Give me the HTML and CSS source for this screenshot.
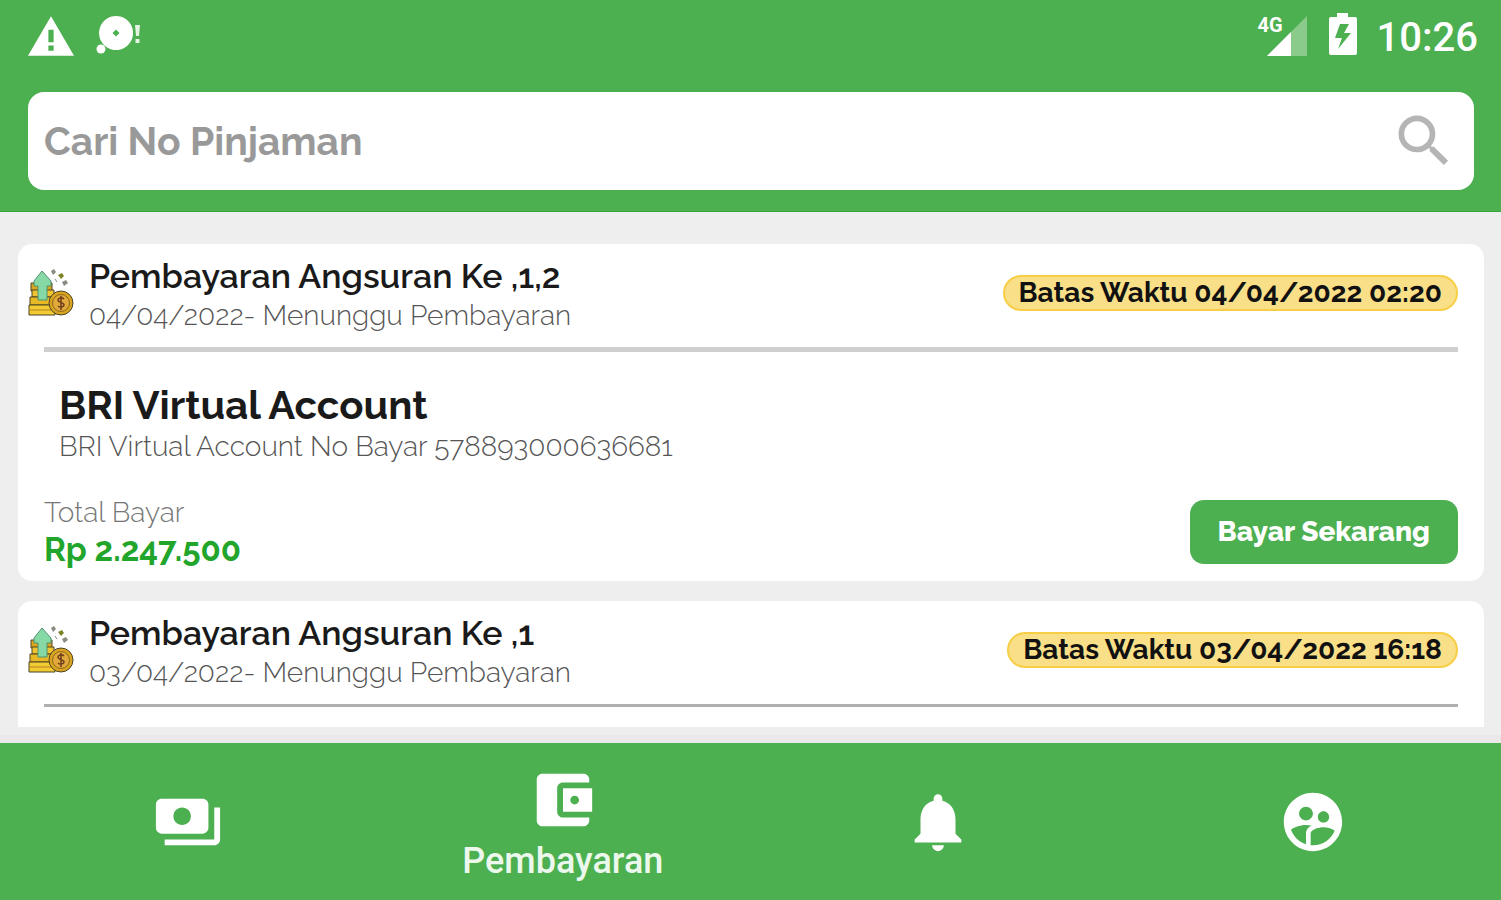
FILE: index.html
```html
<!DOCTYPE html>
<html lang="id">
<head>
<meta charset="utf-8">
<meta name="viewport" content="width=device-width, initial-scale=1">
<title>Pembayaran</title>
<link rel="stylesheet" href="styles.css">
</head>
<body>
<svg class="sprite" aria-hidden="true">
  <symbol id="coins" viewBox="0 0 48 48">
    <g stroke="#4c4426" stroke-width="1">
      <path d="M4 14h21v8H4z" fill="#dca51e"/>
      <path d="M5 21h22v7H5z" fill="#f0c431"/>
      <path d="M3 28h23v8H3z" fill="#e8b825"/>
      <path d="M2 36h26v10H2z" fill="#f2ca33"/>
      <path d="M3 41h24" stroke="#b9821d"/>
      <circle cx="34" cy="34" r="12" fill="#d9a520"/>
      <circle cx="34" cy="34" r="8.5" fill="#e2a93b" stroke="#8d681c"/>
      <path d="M15 2L7 12v5h4v14h9V17h4v-5z" fill="#86d9a5" stroke="#4f9271"/>
    </g>
    <path d="M37 30c-2-2-6-1-6 1 0 3 6 2 6 5 0 2-4 3-6 1M34 27v14" fill="none" stroke="#71421f" stroke-width="1.6"/>
    <path d="M24 2l3-2 2 3-3 3zM35 13l4-2 2 3-4 3z" fill="#8b8b82"/>
    <path d="M31 6l4-2 2 3-3 3z" fill="#7d8428"/>
    <path d="M28 10l2 3" stroke="#888" stroke-width="1"/>
  </symbol>
</svg>
<header class="top">
  <div class="status">
    <div class="status-group">
      <svg class="warn" viewBox="0 0 44 38" role="img" aria-label="Peringatan"><path fill="#fff" fill-rule="evenodd" d="M22 0L0 38h44zM19.500 13h5v12h-5zM19.500 28h5v5h-5z"/></svg>
      <svg class="disc" viewBox="0 0 46 38" role="img" aria-label="Notifikasi"><path fill="#fff" fill-rule="evenodd" d="M20 0a17 17 0 1 0 .1 0zM20 13.500l3.500 3.500-3.500 3.500-3.500-3.500z"/><circle cx="5" cy="33" r="4.500" fill="#fff"/><path d="M39 9h5l-1 11h-3zM39.500 23h4v4h-4z" fill="#e4f3e4"/></svg>
    </div>
    <div class="status-group status-right">
      <div class="signal">
        <span class="net">4G</span>
        <svg class="bars" viewBox="0 0 40 40" aria-hidden="true"><path d="M40 0V40H0z" fill="#8acb8c"/><path d="M24 16V40H0z" fill="#fff"/></svg>
      </div>
      <svg class="battery" viewBox="0 0 28 42" role="img" aria-label="Mengisi daya"><path fill="#fff" fill-rule="evenodd" d="M8 0h11v4h7q2 0 2 2v34q0 2-2 2H2q-2 0-2-2V6q0-2 2-2h6zM11 11L6 25h7l-4 11 13-16h-7l5-9z"/></svg>
      <time class="clock">10:26</time>
    </div>
  </div>
  <form class="search">
    <input class="search-input" type="search" placeholder="Cari No Pinjaman" aria-label="Cari No Pinjaman">
    <button class="search-button" type="button" aria-label="Cari">
      <svg class="search-icon" viewBox="0 0 24 24"><path fill="#b5b5b5" d="M15.500 14h-.79l-.28-.27A6.471 6.471 0 0 0 16 9.500 6.500 6.500 0 1 0 9.500 16c1.610 0 3.090-.59 4.230-1.570l.27.28v.79l5 4.990L20.490 19l-4.990-5zm-6 0C7.010 14 5 11.990 5 9.500S7.010 5 9.500 5 14 7.010 14 9.500 11.990 14 9.500 14z"/></svg>
    </button>
  </form>
</header>
<main class="content">
  <div class="list">
    <article class="card">
      <div class="card-head">
        <svg class="coins" aria-hidden="true"><use href="#coins"/></svg>
        <div class="heading">
          <h2 class="title">Pembayaran Angsuran Ke ,1,2</h2>
          <p class="sub">04/04/2022- Menunggu Pembayaran</p>
        </div>
        <span class="badge">Batas Waktu 04/04/2022 02:20</span>
      </div>
      <hr class="rule">
      <div class="account">
        <h3 class="bank">BRI Virtual Account</h3>
        <p class="sub">BRI Virtual Account No Bayar 578893000636681</p>
      </div>
      <div class="card-foot">
        <div>
          <p class="total-label">Total Bayar</p>
          <p class="total">Rp 2.247.500</p>
        </div>
        <button class="pay" type="button">Bayar Sekarang</button>
      </div>
    </article>
    <article class="card">
      <div class="card-head">
        <svg class="coins" aria-hidden="true"><use href="#coins"/></svg>
        <div class="heading">
          <h2 class="title">Pembayaran Angsuran Ke ,1</h2>
          <p class="sub">03/04/2022- Menunggu Pembayaran</p>
        </div>
        <span class="badge">Batas Waktu 03/04/2022 16:18</span>
      </div>
      <hr class="rule rule-thin">
    </article>
  </div>
</main>
<nav class="nav">
  <a class="nav-item" href="#pinjaman" aria-label="Pinjaman"><svg class="nav-icon" viewBox="0 0 24 24"><path d="M19 14V6c0-1.100-.9-2-2-2H3c-1.100 0-2 .9-2 2v8c0 1.100.9 2 2 2h14c1.100 0 2-.9 2-2zm-9-1c-1.660 0-3-1.340-3-3s1.340-3 3-3 3 1.340 3 3-1.340 3-3 3zm13-6v11c0 1.100-.9 2-2 2H4v-2h17V7h2z"/></svg></a>
  <a class="nav-item" href="#pembayaran" aria-current="page"><svg class="nav-icon" viewBox="0 0 24 24" aria-hidden="true"><path d="M21 18v1c0 1.100-.9 2-2 2H5c-1.110 0-2-.9-2-2V5c0-1.100.89-2 2-2h14c1.100 0 2 .9 2 2v1h-9c-1.110 0-2 .9-2 2v8c0 1.100.89 2 2 2h9zm-9-2h10V8H12v8zm4-2.500c-.83 0-1.500-.67-1.500-1.500s.67-1.500 1.500-1.500 1.500.67 1.500 1.500-.67 1.500-1.500 1.500z"/></svg><span class="nav-label">Pembayaran</span></a>
  <a class="nav-item" href="#notifikasi" aria-label="Notifikasi"><svg class="nav-icon" viewBox="0 0 24 24"><path d="M12 22c1.100 0 2-.9 2-2h-4c0 1.100.89 2 2 2zm6-6v-5c0-3.070-1.640-5.640-4.500-6.320V4c0-.83-.67-1.500-1.500-1.500s-1.500.67-1.500 1.500v.68C7.630 5.360 6 7.920 6 11v5l-2 2v1h16v-1l-2-2z"/></svg></a>
  <a class="nav-item" href="#akun" aria-label="Akun"><svg class="nav-icon" viewBox="0 0 24 24"><path d="M11.990 2c-5.520 0-10 4.480-10 10s4.480 10 10 10 10-4.480 10-10-4.480-10-10-10zm3.610 6.340c1.070 0 1.930.86 1.930 1.930 0 1.070-.86 1.930-1.930 1.930-1.070 0-1.930-.86-1.930-1.930-.01-1.070.86-1.930 1.930-1.930zm-6-1.580c1.300 0 2.360 1.060 2.360 2.360 0 1.300-1.060 2.360-2.360 2.360s-2.360-1.060-2.360-2.360c0-1.310 1.050-2.360 2.360-2.360zm0 9.130v3.750c-2.400-.75-4.300-2.600-5.140-4.960 1.050-1.120 3.670-1.690 5.140-1.690.53 0 1.200.08 1.900.22-1.640.87-1.900 2.020-1.900 2.680zM11.990 20c-.27 0-.53-.01-.79-.04v-4.070c0-1.420 2.940-2.130 4.400-2.130 1.070 0 2.920.39 3.840 1.150-1.170 2.970-4.060 5.090-7.450 5.090z"/></svg></a>
</nav>
</body>
</html>
```
FILE: styles.css
```css
* { box-sizing: border-box; }

body {
  margin: 0;
  height: 100vh;
  display: flex;
  flex-direction: column;
  background: #eeeeee;
  color: #1a1a1a;
  font-family: Raleway, Lato, sans-serif;
}

h2, h3, p { margin: 0; }

.sprite { display: none; }

.top {
  flex: none;
  padding: 12px 27px 21px 28px;
  background: #4caf50;
  border-bottom: 1px solid #36a63b;
}

.status {
  display: flex;
  justify-content: space-between;
  height: 48px;
}

.status-group {
  display: flex;
  align-items: flex-start;
  gap: 22px;
  padding-top: 4px;
}

.status-right { padding-top: 0; }

.warn { width: 46px; height: 40px; }
.disc { width: 46px; height: 38px; }

.signal { display: flex; padding-top: 4px; }
.net {
  font: 700 20px/18px Roboto, sans-serif;
  color: #ffffff;
  margin-right: -16px;
}
.bars { width: 40px; height: 40px; }
.battery { width: 28px; height: 44px; }

.clock {
  margin-right: -4px;
  margin-left: -2px;
  font: 500 40px/52px Roboto, sans-serif;
  color: #ffffff;
}

.search {
  display: flex;
  align-items: center;
  height: 98px;
  margin-top: 32px;
  padding: 0 16px;
  background: #ffffff;
  border-radius: 16px;
}

.search-input {
  flex: 1;
  min-width: 0;
  padding: 0;
  border: 0;
  outline: 0;
  background: transparent;
  font: 700 39px/48px Raleway, Lato, sans-serif;
  color: #1a1a1a;
}
.search-input::placeholder { color: #999999; opacity: 1; }

.search-button {
  display: flex;
  padding: 0;
  border: 0;
  background: transparent;
}
.search-icon { width: 68px; height: 68px; }

.content {
  flex: 1;
  min-height: 0;
  display: flex;
  flex-direction: column;
  padding: 32px 17px 16px 18px;
}

.list {
  flex: 1;
  min-height: 0;
  overflow: hidden;
  display: flex;
  flex-direction: column;
  gap: 20px;
}

.card {
  flex: none;
  background: #ffffff;
  border-radius: 14px;
  padding: 6px 26px 12px;
}

.card-head {
  display: flex;
  align-items: center;
  margin-left: -17px;
}

.coins { width: 48px; height: 48px; margin-right: 14px; }

.heading { flex: 1; padding-top: 6px; }

.title { font-size: 34px; line-height: 40px; font-weight: 600; }

.sub { font-size: 28px; line-height: 40px; font-weight: 300; color: #555555; }

.badge {
  padding: 0 14px;
  border: 2px solid #f7ce46;
  border-radius: 18px;
  background: #f9df87;
  font-size: 28px;
  line-height: 32px;
  font-weight: 700;
  color: #111111;
}

.rule {
  height: 5px;
  margin: 11px 0 31px;
  border: 0;
  background: #cfcfcf;
}
.rule-thin { height: 3px; background: #b0b0b0; }

.account { padding-left: 15px; }

.bank { font-size: 40px; line-height: 44px; font-weight: 700; }

.card-foot {
  display: flex;
  justify-content: space-between;
  align-items: center;
  margin-top: 28px;
}

.total-label { font-size: 28px; line-height: 36px; font-weight: 300; color: #777777; }
.total { font-size: 33px; line-height: 38px; font-weight: 700; color: #22a52b; }

.pay {
  padding: 12px 28px;
  border: 0;
  border-radius: 14px;
  background: #4caf50;
  color: #ffffff;
  font: 800 28px/40px Raleway, Lato, sans-serif;
}

.nav {
  flex: none;
  display: grid;
  grid-template-columns: repeat(4, 1fr);
  height: 157px;
  background: #4caf50;
  box-shadow: 0 -8px 0 #ebe8ea;
}

.nav-item {
  display: flex;
  flex-direction: column;
  align-items: center;
  justify-content: center;
  color: #ffffff;
  text-decoration: none;
}

.nav-icon { width: 70px; height: 70px; fill: #ffffff; }

.nav-label {
  margin-bottom: -8px;
  font: 500 36px/52px Roboto, sans-serif;
  color: #edf8ed;
}
```
